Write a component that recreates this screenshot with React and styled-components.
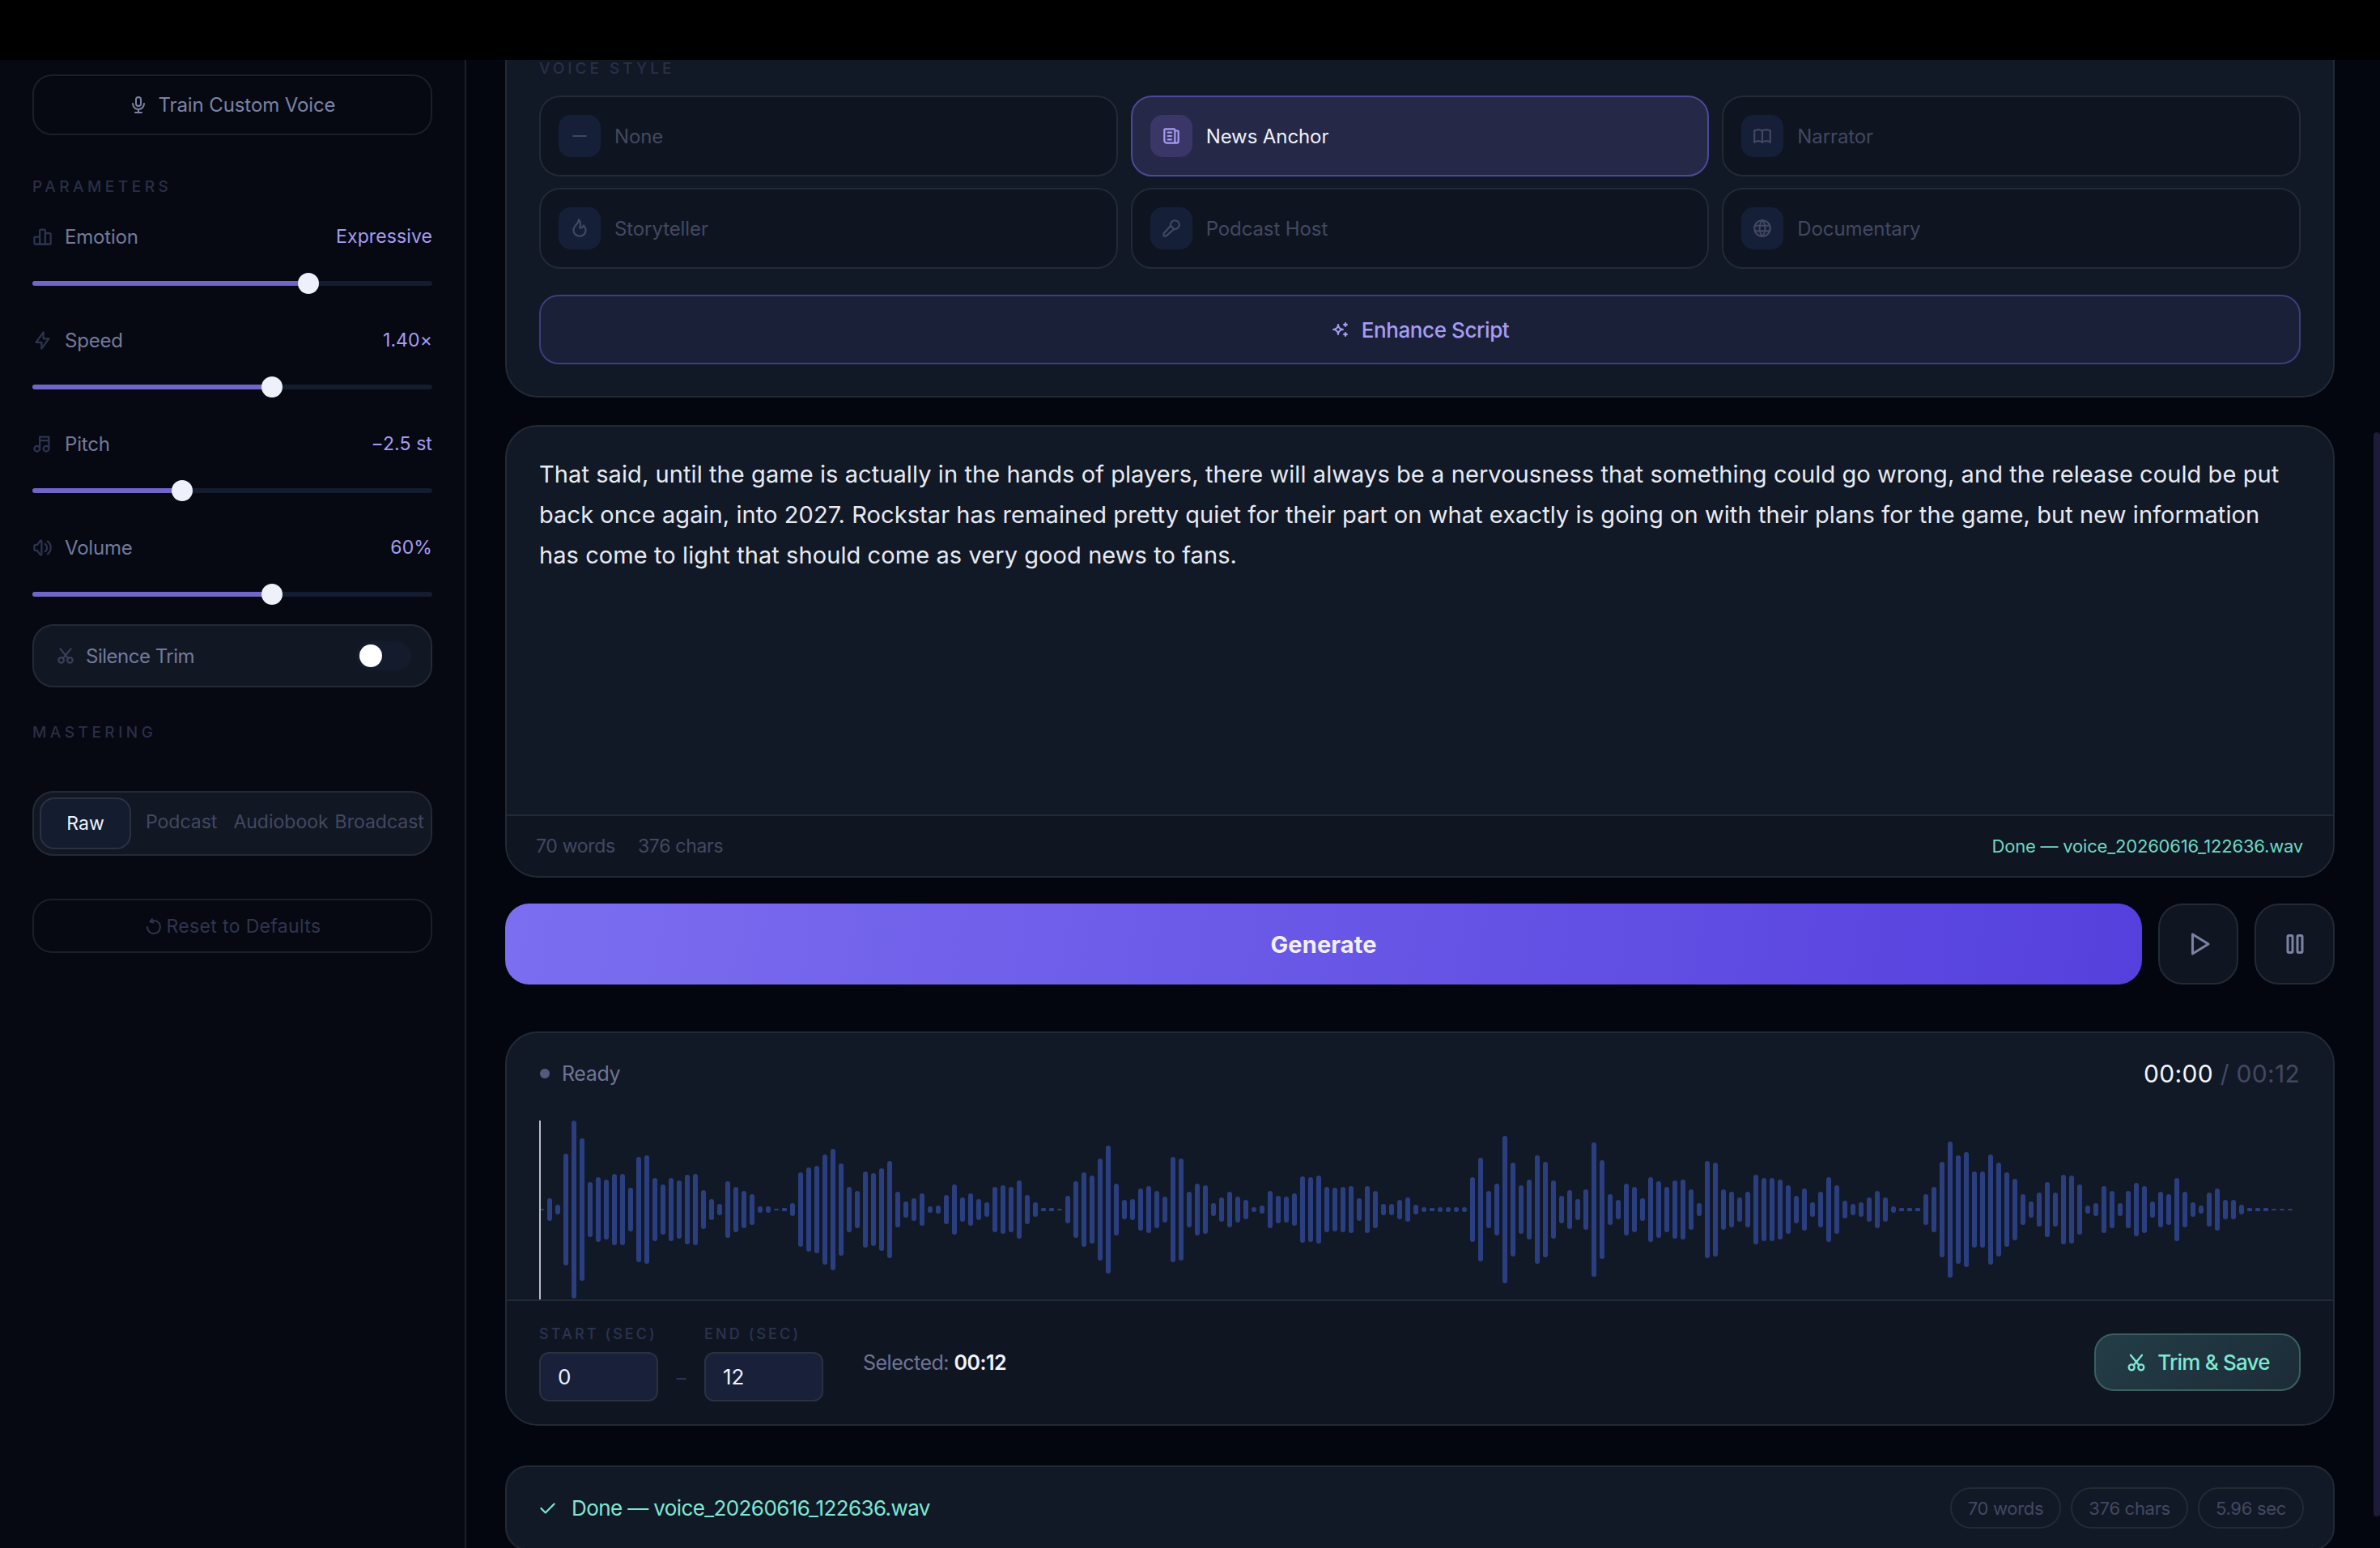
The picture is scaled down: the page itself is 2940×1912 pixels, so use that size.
// Libs
import React from 'react';
import styled, { createGlobalStyle } from 'styled-components';
import {
	TbBolt, TbBook, TbChartBar, TbCheck, TbCut, TbFlame, TbMicrophone, TbMicrophone2, TbMinus,
	TbMusic, TbNews, TbPlayerPause, TbPlayerPlay, TbSparkles, TbVolume, TbWorld,
} from 'react-icons/tb';

const GlobalStyle = createGlobalStyle`
	html, body, #root {
		margin: 0;
		height: 100%;
		background: #000;
	}
	* {
		box-sizing: border-box;
	}
	body {
		font-family: Inter, "Liberation Sans", sans-serif;
		overflow: hidden;
	}
`;

const Page = styled.div`
	position: relative;
	height: 1912px;
	display: flex;
	flex-direction: column;
	overflow: hidden;
`;

const TopBar = styled.div`
	height: 74px;
	flex: none;
	background: #000;
`;

const Body = styled.div`
	flex: 1;
	display: flex;
	min-height: 0;
`;

const Sidebar = styled.aside`
	width: 576px;
	flex: none;
	padding: 18px 40px 0 40px;
	background: #060911;
	border-right: 2px solid #1a1f2a;
`;

const GhostButton = styled.button`
	width: 100%;
	height: ${(props) => (props.dim ? '67px' : '75px')};
	margin-top: ${(props) => (props.dim ? '53px' : '0')};
	display: flex;
	align-items: center;
	justify-content: center;
	gap: ${(props) => (props.dim ? '4px' : '12px')};
	background: transparent;
	border: 2px solid #1b1f29;
	border-radius: 24px;
	color: ${(props) => (props.dim ? '#30354e' : '#7b82a4')};
	font: 400 ${(props) => (props.dim ? '23px' : '24px')} Inter, sans-serif;
	letter-spacing: ${(props) => (props.dim ? '0.35px' : '-0.1px')};

	svg {
		width: 24px;
		height: 24px;
	}
`;

const SectionTitle = styled.div`
	height: 20px;
	margin-top: ${(props) => props.top}px;
	font-size: 19px;
	line-height: 20px;
	font-weight: 500;
	letter-spacing: 4.5px;
	color: #2a2f48;
`;

const ParamList = styled.div`
	margin-top: 36px;
`;

const Param = styled.div`
	height: 128px;
`;

const ParamHead = styled.div`
	height: 30px;
	display: flex;
	align-items: center;
	font-size: 24px;
	letter-spacing: -0.2px;
	color: #737a9c;
`;

const ParamIcon = styled.span`
	width: 40px;
	display: flex;
	color: #2d3350;

	svg {
		width: 27px;
		height: 27px;
		margin-left: -1px;
	}
`;

const ParamValue = styled.span`
	margin-left: auto;
	color: #a79cf2;
	font-size: 23px;
	letter-spacing: 0.1px;
`;

const Slider = styled.div`
	position: relative;
	height: 6px;
	margin-top: 40px;
	border-radius: 3px;
	background: #141c30;
`;

const SliderFill = styled.div`
	height: 100%;
	border-radius: 3px;
	background: #6f66c8;
`;

const SliderThumb = styled.div`
	position: absolute;
	top: -10px;
	width: 26px;
	height: 26px;
	margin-left: -13px;
	border-radius: 50%;
	background: #eef1fb;
`;

const TrimRow = styled.div`
	height: 78px;
	margin-top: -18px;
	padding: 0 24px 0 26px;
	position: relative;
	display: flex;
	align-items: center;
	gap: 12px;
	background: #111723;
	border: 2px solid #232a36;
	border-radius: 26px;
	font-size: 24px;
	letter-spacing: -0.5px;
	color: #737a9c;

	svg {
		width: 26px;
		height: 26px;
		color: #3a405c;
	}
`;

const Toggle = styled.div`
	width: 68px;
	height: 36px;
	margin-left: auto;
	padding: 4px;
	border-radius: 18px;
	background: #131b2d;
`;

const ToggleKnob = styled.div`
	width: 28px;
	height: 28px;
	border-radius: 50%;
	background: #fff;
`;

const MasterGroup = styled.div`
	height: 80px;
	margin-top: 62px;
	padding: 6px 0 0 7px;
	display: flex;
	align-items: flex-start;
	background: #111723;
	border: 2px solid #232a36;
	border-radius: 26px;
	white-space: nowrap;
`;

const MasterTab = styled.div`
	height: ${(props) => (props.active ? '64px' : '60px')};
	width: ${(props) => (props.active ? '113px' : 'auto')};
	margin-left: ${(props) => props.gap || 0}px;
	display: flex;
	align-items: center;
	justify-content: center;
	background: ${(props) => (props.active ? '#141c30' : 'transparent')};
	border: ${(props) => (props.active ? '2px solid #2a3140' : 'none')};
	border-radius: 18px;
	font-size: 23px;
	letter-spacing: 0;
	color: ${(props) => (props.active ? '#eef1fb' : '#434862')};
`;

const Main = styled.main`
	flex: 1;
	min-width: 0;
	padding: 0 56px 0 48px;
	display: flex;
	flex-direction: column;
	background: #03060e;
`;

const StyleCard = styled.section`
	height: 417px;
	flex: none;
	padding: 0 40px;
	background: #111926;
	border: 2px solid #222a36;
	border-top: none;
	border-radius: 0 0 40px 40px;
`;

const StyleTitle = styled.div`
	height: 20px;
	padding-top: 1px;
	font-size: 19px;
	line-height: 20px;
	font-weight: 500;
	letter-spacing: 4px;
	color: #2a2f48;
`;

const StyleGrid = styled.div`
	margin-top: 24px;
	display: grid;
	grid-template-columns: repeat(3, 1fr);
	gap: 14px 16px;
`;

const StyleTile = styled.div`
	height: 100px;
	padding: 0 22px;
	display: flex;
	align-items: center;
	gap: 17px;
	background: ${(props) => (props.active ? '#252846' : '#0e1520')};
	border: 2px solid ${(props) => (props.active ? '#4b4a96' : '#222a36')};
	border-radius: 26px;
	font-size: 24px;
	letter-spacing: -0.1px;
	color: ${(props) => (props.active ? '#eef1fb' : '#434862')};
`;

const StyleIcon = styled.span`
	width: 52px;
	height: 52px;
	display: flex;
	align-items: center;
	justify-content: center;
	border-radius: 15px;
	background: ${(props) => (props.active ? '#3a3768' : '#161f38')};
	color: ${(props) => (props.active ? '#a79cf2' : '#434862')};

	svg {
		width: 26px;
		height: 26px;
	}
`;

const EnhanceButton = styled.button`
	width: 100%;
	height: 86px;
	margin-top: 32px;
	display: flex;
	align-items: center;
	justify-content: center;
	gap: 14px;
	background: #1b2039;
	border: 2px solid #3d3d7a;
	border-radius: 24px;
	color: #a79cf2;
	font: 500 26px Inter, sans-serif;
	letter-spacing: -0.4px;

	svg {
		width: 24px;
		height: 24px;
	}
`;

const ScriptCard = styled.section`
	height: 559px;
	flex: none;
	margin-top: 34px;
	display: flex;
	flex-direction: column;
	background: #111926;
	border: 2px solid #222a36;
	border-radius: 40px;
	overflow: hidden;
`;

const ScriptText = styled.div`
	flex: 1;
	padding: 34px 40px 0 40px;
	font-size: 29px;
	line-height: 50px;
	letter-spacing: 0.08px;
	color: #e8eaf2;
`;

const ScriptFooter = styled.div`
	height: 76px;
	flex: none;
	padding: 0 37px 0 36px;
	display: flex;
	align-items: center;
	gap: 28px;
	background: #0f1622;
	border-top: 2px solid #222a36;
	font-size: 23px;
	letter-spacing: -0.3px;
	color: #434862;
`;

const DoneNote = styled.span`
	margin-left: auto;
	font-size: 22px;
	letter-spacing: -0.2px;
	color: #6fd8c4;
`;

const ActionRow = styled.div`
	height: 100px;
	flex: none;
	margin-top: 32px;
	display: flex;
	gap: 20px;
`;

const GenerateButton = styled.button`
	flex: 1;
	border: none;
	border-radius: 30px;
	background: linear-gradient(100deg, #7c6ef0 0%, #5540dd 100%);
	color: #f2f0ff;
	font: 700 29px Inter, sans-serif;
	letter-spacing: 0.1px;
`;

const SquareButton = styled.button`
	width: 99px;
	flex: none;
	display: flex;
	align-items: center;
	justify-content: center;
	background: #0f1622;
	border: 2px solid #222a36;
	border-radius: 30px;
	color: #7b82a4;

	svg {
		width: 36px;
		height: 36px;
	}
`;

const PlayerCard = styled.section`
	height: 487px;
	flex: none;
	margin-top: 58px;
	display: flex;
	flex-direction: column;
	background: #111926;
	border: 2px solid #222a36;
	border-radius: 40px;
	overflow: hidden;
`;

const PlayerHead = styled.div`
	height: 108px;
	flex: none;
	padding: 0 41px 9px 41px;
	display: flex;
	align-items: center;
	font-size: 25px;
	letter-spacing: -0.4px;
	color: #6f7594;
`;

const StatusDot = styled.span`
	width: 12px;
	height: 12px;
	margin-right: 15px;
	border-radius: 50%;
	background: #555a7c;
`;

const TimeLabel = styled.span`
	margin-left: auto;
	font-size: 30px;
	letter-spacing: 0.3px;
	color: #434862;
`;

const TimeNow = styled.span`
	color: #f2f4fa;
`;

const WaveArea = styled.div`
	position: relative;
	height: 221px;
	flex: none;
	padding: 0 40px;
`;

const Playhead = styled.div`
	position: absolute;
	left: 40px;
	top: 0;
	bottom: 0;
	width: 2px;
	background: #b9bdc9;
`;

const PlayerFooter = styled.div`
	flex: 1;
	padding: 0 40px;
	display: flex;
	align-items: flex-start;
	background: #0f1622;
	border-top: 2px solid #222a36;
`;

const TimeField = styled.div`
	width: 147px;
	padding-top: 31px;
`;

const FieldLabel = styled.div`
	height: 20px;
	font-size: 18px;
	line-height: 20px;
	font-weight: 500;
	letter-spacing: 3.1px;
	white-space: nowrap;
	color: #2d3350;
`;

const FieldInput = styled.div`
	height: 61px;
	margin-top: 12px;
	padding-left: 21px;
	display: flex;
	align-items: center;
	background: #18203a;
	border: 2px solid #2a3140;
	border-radius: 12px;
	font-size: 26px;
	color: #eef1fb;
`;

const RangeDash = styled.span`
	width: 57px;
	padding-top: 80px;
	text-align: center;
	font-size: 24px;
	color: #2d3350;
`;

const SelectedLabel = styled.div`
	margin: 61px 0 0 49px;
	font-size: 25px;
	letter-spacing: -0.5px;
	color: #6f7594;

	b {
		font-weight: 600;
		color: #f2f4fa;
	}
`;

const TrimButton = styled.button`
	width: 255px;
	height: 71px;
	margin: 40px 0 0 auto;
	display: flex;
	align-items: center;
	justify-content: center;
	gap: 12px;
	background: linear-gradient(135deg, #233d46, #1c2c38);
	border: 2px solid #3a6060;
	border-radius: 24px;
	color: #7ee8d4;
	font: 500 26px Inter, sans-serif;
	letter-spacing: -0.8px;

	svg {
		width: 28px;
		height: 28px;
	}
`;

const ResultCard = styled.section`
	height: 105px;
	flex: none;
	margin-top: 49px;
	padding: 0 36px 0 37px;
	display: flex;
	align-items: center;
	background: #111926;
	border: 2px solid #222a36;
	border-radius: 28px;
`;

const ResultName = styled.div`
	display: flex;
	align-items: center;
	gap: 17px;
	font-size: 26px;
	letter-spacing: -0.6px;
	color: #7ee8d4;

	svg {
		width: 26px;
		height: 26px;
	}
`;

const ChipRow = styled.div`
	margin-left: auto;
	display: flex;
	gap: 12px;
`;

const Chip = styled.span`
	height: 51px;
	padding: 0 20px;
	display: flex;
	align-items: center;
	border: 2px solid #222a36;
	border-radius: 26px;
	font-size: 22px;
	letter-spacing: -0.3px;
	color: #434862;
`;

const ScrollThumb = styled.div`
	position: absolute;
	right: 0;
	top: 534px;
	width: 8px;
	height: 1339px;
	border-radius: 4px;
	background: #1e1b3a;
`;

const params = [
	{ name: 'Emotion', value: 'Expressive', pos: 69, Icon: TbChartBar },
	{ name: 'Speed', value: '1.40×', pos: 60, Icon: TbBolt },
	{ name: 'Pitch', value: '−2.5 st', pos: 37.4, Icon: TbMusic },
	{ name: 'Volume', value: '60%', pos: 60, Icon: TbVolume },
];

const voiceStyles = [
	{ name: 'None', Icon: TbMinus },
	{ name: 'News Anchor', Icon: TbNews, active: true },
	{ name: 'Narrator', Icon: TbBook },
	{ name: 'Storyteller', Icon: TbFlame },
	{ name: 'Podcast Host', Icon: TbMicrophone2 },
	{ name: 'Documentary', Icon: TbWorld },
];

// bar heights read off the reference, three units to a pixel
const waveHeights = [
	6, 84, 36, 414, 659, 528, 204, 240, 222, 264, 264, 162, 390, 402, 234, 186, 234, 216, 258, 264,
	144, 78, 42, 210, 168, 138, 114, 24, 24, 6, 12, 48, 276, 312, 324, 408, 450, 342, 168, 138,
	282, 270, 306, 360, 132, 60, 84, 120, 24, 30, 108, 186, 90, 120, 78, 54, 168, 180, 168, 216,
	108, 54, 12, 12, 6, 102, 210, 276, 252, 378, 474, 192, 72, 78, 156, 174, 138, 96, 390, 378,
	132, 192, 180, 48, 90, 132, 96, 72, 18, 30, 138, 102, 96, 120, 246, 240, 252, 168, 162, 168,
	174, 84, 174, 138, 42, 42, 72, 90, 36, 18, 12, 18, 18, 18, 18, 240, 384, 138, 192, 546,
	348, 180, 222, 402, 354, 216, 102, 144, 78, 150, 498, 366, 114, 72, 192, 168, 84, 240, 210, 168,
	216, 222, 150, 48, 360, 348, 150, 132, 90, 132, 258, 234, 234, 222, 180, 102, 156, 54, 132, 240,
	180, 66, 42, 54, 90, 138, 90, 24, 12, 12, 12, 114, 168, 354, 504, 402, 426, 282, 282, 408,
	348, 276, 228, 114, 60, 126, 204, 126, 258, 252, 186, 30, 48, 174, 138, 48, 138, 198, 174, 60,
	132, 114, 234, 132, 54, 30, 126, 156, 72, 72, 36, 12, 12, 12, 6, 6, 6,
];

const Waveform = () => (
	<svg width="2174" height="221" viewBox="0 0 2174 221" style={{ display: 'block' }}>
		{waveHeights.map((h, i) => {
			const height = Math.max(h / 3, 2);
			return (
				<rect
					key={i}
					x={i * 10}
					y={110 - height / 2}
					width="6"
					height={height}
					rx={height < 6 ? 1 : 3}
					fill="#2b3f80"
				/>
			);
		})}
	</svg>
);

const ResetIcon = () => (
	<svg viewBox="0 0 24 24" fill="none" stroke="currentColor" strokeWidth="2" strokeLinecap="round" strokeLinejoin="round">
		<path d="M10 3 L7.5 6.4 L11.5 7.5" />
		<path d="M7.5 6.4 A8 8 0 1 1 4 13" />
	</svg>
);

const App = () => (
	<Page>
		<GlobalStyle />
		<TopBar />
		<Body>
			<Sidebar>
				<GhostButton>
					<TbMicrophone />
					Train Custom Voice
				</GhostButton>
				<SectionTitle top={54}>PARAMETERS</SectionTitle>
				<ParamList>
					{params.map(({ name, value, pos, Icon }) => (
						<Param key={name}>
							<ParamHead>
								<ParamIcon><Icon /></ParamIcon>
								{name}
								<ParamValue>{value}</ParamValue>
							</ParamHead>
							<Slider>
								<SliderFill style={{ width: `${pos}%` }} />
								<SliderThumb style={{ left: `${pos}%` }} />
							</Slider>
						</Param>
					))}
				</ParamList>
				<TrimRow>
					<TbCut />
					Silence Trim
					<Toggle><ToggleKnob /></Toggle>
				</TrimRow>
				<SectionTitle top={46}>MASTERING</SectionTitle>
				<MasterGroup>
					<MasterTab active>Raw</MasterTab>
					<MasterTab gap={18}>Podcast</MasterTab>
					<MasterTab gap={20}>Audiobook</MasterTab>
					<MasterTab gap={8}>Broadcast</MasterTab>
				</MasterGroup>
				<GhostButton dim>
					<ResetIcon />
					Reset to Defaults
				</GhostButton>
			</Sidebar>
			<Main>
				<StyleCard>
					<StyleTitle>VOICE STYLE</StyleTitle>
					<StyleGrid>
						{voiceStyles.map(({ name, Icon, active }) => (
							<StyleTile key={name} active={active}>
								<StyleIcon active={active}><Icon /></StyleIcon>
								{name}
							</StyleTile>
						))}
					</StyleGrid>
					<EnhanceButton>
						<TbSparkles />
						Enhance Script
					</EnhanceButton>
				</StyleCard>
				<ScriptCard>
					<ScriptText>
						That said, until the game is actually in the hands of players, there will always be a nervousness that something could go wrong, and the release could be put back once again, into 2027. Rockstar has remained pretty quiet for their part on what exactly is going on with their plans for the game, but new information has come to light that should come as very good news to fans.
					</ScriptText>
					<ScriptFooter>
						<span>70 words</span>
						<span>376 chars</span>
						<DoneNote>Done — voice_20260616_122636.wav</DoneNote>
					</ScriptFooter>
				</ScriptCard>
				<ActionRow>
					<GenerateButton>Generate</GenerateButton>
					<SquareButton><TbPlayerPlay /></SquareButton>
					<SquareButton><TbPlayerPause /></SquareButton>
				</ActionRow>
				<PlayerCard>
					<PlayerHead>
						<StatusDot />
						Ready
						<TimeLabel><TimeNow>00:00</TimeNow> / 00:12</TimeLabel>
					</PlayerHead>
					<WaveArea>
						<Waveform />
						<Playhead />
					</WaveArea>
					<PlayerFooter>
						<TimeField>
							<FieldLabel>START (SEC)</FieldLabel>
							<FieldInput>0</FieldInput>
						</TimeField>
						<RangeDash>–</RangeDash>
						<TimeField>
							<FieldLabel>END (SEC)</FieldLabel>
							<FieldInput>12</FieldInput>
						</TimeField>
						<SelectedLabel>Selected: <b>00:12</b></SelectedLabel>
						<TrimButton>
							<TbCut />
							Trim &amp; Save
						</TrimButton>
					</PlayerFooter>
				</PlayerCard>
				<ResultCard>
					<ResultName>
						<TbCheck />
						Done — voice_20260616_122636.wav
					</ResultName>
					<ChipRow>
						<Chip>70 words</Chip>
						<Chip>376 chars</Chip>
						<Chip>5.96 sec</Chip>
					</ChipRow>
				</ResultCard>
			</Main>
		</Body>
		<ScrollThumb />
	</Page>
);

export default App;
